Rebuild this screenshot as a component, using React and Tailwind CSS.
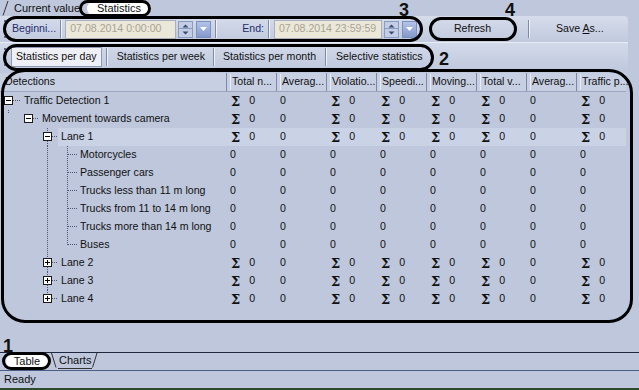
const cols = ["Total n...", "Averag...", "Violatio...", "Speedi...", "Moving...", "Total v...", "Averag...", "Traffic p..."];
const sumCols = [true, false, true, true, true, true, false, true];

const rows = [
    { label: "Traffic Detection 1", kind: "l0", sum: true },
    { label: "Movement towards camera", kind: "l1", sum: true },
    { label: "Lane 1", kind: "lane", box: "minus", sum: true, hl: true },
    { label: "Motorcycles", kind: "leaf" },
    { label: "Passenger cars", kind: "leaf" },
    { label: "Trucks less than 11 m long", kind: "leaf" },
    { label: "Trucks from 11 to 14 m long", kind: "leaf" },
    { label: "Trucks more than 14 m long", kind: "leaf" },
    { label: "Buses", kind: "leafLast" },
    { label: "Lane 2", kind: "lane", box: "plus", sum: true },
    { label: "Lane 3", kind: "lane", box: "plus", sum: true },
    { label: "Lane 4", kind: "laneLast", box: "plus", sum: true },
];

const dot = { stroke: "#4d5874", strokeWidth: 1, strokeDasharray: "1 1" };

const Box = ({ x, plus }) => (
    <g>
        <rect x={x + 0.5} y={4.5} width={8} height={8} fill="#ffffff" stroke="#1b1b1b" />
        <line x1={x + 2} y1={8.5} x2={x + 7} y2={8.5} stroke="#000" />
        {plus && <line x1={x + 4.5} y1={6} x2={x + 4.5} y2={11} stroke="#000" />}
    </g>
);

// tree connectors for one row
const Guides = ({ kind, box }) => {
    if (kind === "l0")
        return (
            <svg width="21" height="18" className="shrink-0">
                <Box x={4} />
                <line x1={13} y1={8.5} x2={20} y2={8.5} {...dot} />
            </svg>
        );
    if (kind === "l1")
        return (
            <svg width="39" height="18" className="shrink-0">
                <line x1={8.5} y1={0} x2={8.5} y2={4} {...dot} />
                <Box x={24} />
                <line x1={33} y1={8.5} x2={39} y2={8.5} {...dot} />
            </svg>
        );
    if (kind === "lane" || kind === "laneLast")
        return (
            <svg width="58" height="18" className="shrink-0">
                <line x1={47.5} y1={0} x2={47.5} y2={4} {...dot} />
                {kind === "lane" && <line x1={47.5} y1={13} x2={47.5} y2={18} {...dot} />}
                <Box x={43} plus={box === "plus"} />
                <line x1={52} y1={8.5} x2={58} y2={8.5} {...dot} />
            </svg>
        );
    return (
        <svg width="77" height="18" className="shrink-0">
            <line x1={47.5} y1={0} x2={47.5} y2={18} {...dot} />
            <line x1={67.5} y1={0} x2={67.5} y2={kind === "leafLast" ? 9 : 18} {...dot} />
            <line x1={68} y1={8.5} x2={77} y2={8.5} {...dot} />
        </svg>
    );
};

const Cell = ({ sum }) => (
    <div className="flex w-[50px] shrink-0 items-center pl-[5px]">
        {sum ? (
            <>
                <span className="font-['DejaVu_Serif'] text-[13px] font-bold leading-none text-[#111]">Σ</span>
                <span className="ml-[9px]">0</span>
            </>
        ) : (
            <span className="-ml-[1px]">0</span>
        )}
    </div>
);

const Row = ({ r }) => (
    <div className="flex h-[18px] items-stretch">
        <div className="flex w-[226px] shrink-0 items-stretch">
            <Guides kind={r.kind} box={r.box} />
            <div className={`flex flex-1 items-center pl-[3px] ${r.hl ? "bg-[#cad2e6]" : ""}`}>{r.label}</div>
        </div>
        <div className={`flex ${r.hl ? "bg-[#cad2e6]" : ""}`}>
            {sumCols.map((s, i) => (
                <Cell key={i} sum={r.sum ? s : false} />
            ))}
        </div>
    </div>
);

const Spin = () => (
    <div className="ml-[2px] flex h-[17px] w-[15px] flex-col border border-[#8a9cc4] bg-[#c3cde6]">
        <svg width="13" height="7" className="border-b border-[#8a9cc4]">
            <path d="M3.5 5.5 L6.5 2.5 L9.5 5.5 Z" fill="#3b4a6e" />
        </svg>
        <svg width="13" height="8">
            <path d="M3.5 2.5 L6.5 5.5 L9.5 2.5 Z" fill="#3b4a6e" />
        </svg>
    </div>
);

const Drop = () => (
    <div className="ml-[3px] flex h-[17px] w-[15px] items-center justify-center border border-[#7d8fbd] bg-gradient-to-b from-[#b3c3e8] to-[#8599cc]">
        <svg width="9" height="6">
            <path d="M1 1 L8 1 L4.5 5 Z" fill="#ffffff" />
        </svg>
    </div>
);

const Sep = ({ className = "" }) => (
    <div className={`h-[18px] w-[2px] border-l border-[#7f8aa6] bg-white/70 ${className}`} />
);

const Grip = () => (
    <div className="ml-[4px] flex flex-col gap-[2px]">
        {[0, 1, 2, 3, 4].map((i) => (
            <div key={i} className="h-[2px] w-[2px] bg-[#5b6787]" />
        ))}
    </div>
);

const DateBox = ({ value, w }) => (
    <div className={`flex h-[19px] items-center border border-[#a9b0bd] bg-[#ebe8d9] pl-[4px] text-[#a9a392] ${w}`}>
        {value}
    </div>
);

export default function App() {
    return (
        <div className="relative h-[390px] w-[639px] overflow-hidden bg-[#bec7dc] font-['Liberation_Sans',sans-serif] text-[10.6px] text-[#111]">
            {/* top tabs */}
            <div className="flex h-[16px] items-end">
                <div className="flex h-[16px] items-center pl-[2px]">
                    <svg width="9" height="16">
                        <line x1="1" y1="15.5" x2="6" y2="1" stroke="#333" />
                    </svg>
                    <span className="ml-[3px] text-[11px]">Current value</span>
                </div>
                <div className="ml-[7px] flex h-[15px] w-[64px] items-center justify-center rounded-full bg-white text-[11px]">Statistics</div>
            </div>

            {/* toolbar */}
            <div className="flex h-[26px] w-[628px] items-center rounded-r-[4px] bg-gradient-to-b from-[#d6dcea] to-[#c1c9de]">
                <Grip />
                <span className="ml-[6px] text-[#1d2d6b]">Beginni...</span>
                <Sep className="ml-[4px]" />
                <div className="ml-[3px] flex items-center">
                    <DateBox value="07.08.2014 0:00:00" w="w-[111px]" />
                    <Spin />
                    <Drop />
                </div>
                <Sep className="ml-[4px]" />
                <span className="ml-[25px] text-[#1d2d6b]">End:</span>
                <Sep className="ml-[4px]" />
                <div className="ml-[4px] flex items-center">
                    <DateBox value="07.08.2014 23:59:59" w="w-[108px]" />
                    <Spin />
                    <Drop />
                </div>
                <div className="ml-[37px] w-[36px]">Refresh</div>
                <Sep className="ml-[38px]" />
                <span className="ml-[26px]">
                    Save <span className="underline">A</span>s...
                </span>
            </div>

            {/* sub tabs */}
            <div className="flex h-[29px] w-[628px] items-center border-t border-[#e8ecf5] bg-gradient-to-b from-[#d2d9e9] to-[#bfc8dd]">
                <Grip />
                <div className="ml-[5px] flex h-[20px] items-center border border-[#8e99b6] bg-[#eef0f6] px-[4px]">Statistics per day</div>
                <Sep className="ml-[4px]" />
                <span className="ml-[9px]">Statistics per week</span>
                <Sep className="ml-[8px]" />
                <span className="ml-[8px]">Statistics per month</span>
                <Sep className="ml-[9px]" />
                <span className="ml-[9px]">Selective statistics</span>
            </div>

            {/* table */}
            <div className="mt-[2px] w-[628px]">
                <div className="flex h-[19px] w-[626px] items-stretch border-b border-[#9aa5c2] bg-[#c7cfe3]">
                    <div className="flex w-[226px] items-center pl-[5px]">Detections</div>
                    {cols.map((c, i) => (
                        <div key={i} className="flex w-[50px] items-center whitespace-nowrap border-l border-[#7d88a6] pl-[3px]">
                            <span className="border-l border-white/60 pl-[1px]">{c}</span>
                        </div>
                    ))}
                </div>
                {rows.map((r) => (
                    <Row key={r.label} r={r} />
                ))}
            </div>

            {/* bottom tabs */}
            <div className="absolute bottom-0 left-0 w-full">
                <div className="flex h-[18px] items-start border-t border-[#1e2740]">
                    <div className="ml-[6px] mt-[1px] flex h-[15px] w-[42px] items-center justify-center rounded-full bg-white text-[11px]">Table</div>
                    <div className="ml-[3px] flex h-[15px] items-center text-[11px]">
                        <svg width="6" height="15">
                            <line x1="0.5" y1="0" x2="5" y2="14.5" stroke="#333" />
                        </svg>
                        <span className="ml-[1px] border-b border-[#333] px-[1px]">Charts</span>
                        <svg width="6" height="15">
                            <line x1="0.5" y1="14.5" x2="5" y2="0" stroke="#333" />
                        </svg>
                    </div>
                </div>
                <div className="flex h-[18px] items-center border-t border-[#4c5d86] pl-[4px] text-[11px]">Ready</div>
                <div className="h-[2px] bg-[#2d4a2e]" />
            </div>

            {/* annotations */}
            <div className="pointer-events-none absolute inset-0 font-bold">
                <div className="absolute left-[79px] top-0 h-[17px] w-[72px] rounded-full border-[3px] border-black" />
                <div className="absolute left-[3px] top-[16px] h-[26px] w-[420px] rounded-full border-[3px] border-black" />
                <div className="absolute left-[429px] top-[17px] h-[24px] w-[88px] rounded-full border-[3px] border-black" />
                <div className="absolute left-[3px] top-[44px] h-[27px] w-[431px] rounded-full border-[3px] border-black" />
                <div className="absolute left-[1px] top-[69px] h-[254px] w-[632px] rounded-[24px] border-[3px] border-black" />
                <div className="absolute left-[2px] top-[352px] h-[18px] w-[49px] rounded-full border-[3px] border-black" />
                <span className="absolute left-[399px] top-[-3px] text-[18px]">3</span>
                <span className="absolute left-[505px] top-[-3px] text-[18px]">4</span>
                <span className="absolute left-[439px] top-[46px] text-[18px]">2</span>
                <span className="absolute left-[3px] top-[333px] text-[18px]">1</span>
            </div>
        </div>
    );
}
